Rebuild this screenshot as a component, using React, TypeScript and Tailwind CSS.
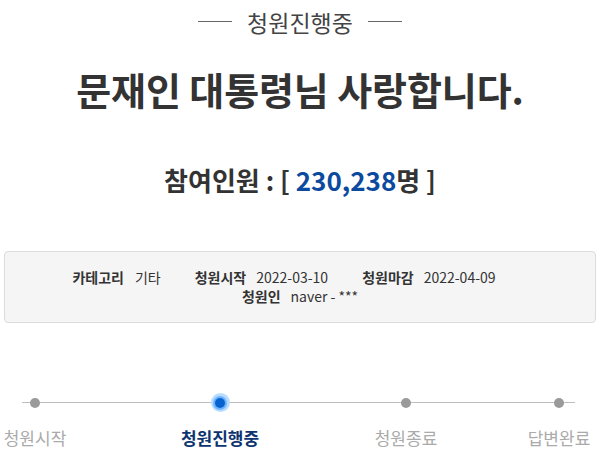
import React from 'react';

const steps = [
  { label: '청원시작', active: false, ml: 'ml-0' },
  { label: '청원진행중', active: true, ml: 'ml-[115px]' },
  { label: '청원종료', active: false, ml: 'ml-[116px]' },
  { label: '답변완료', active: false, ml: 'ml-[83px]' },
];

export default function App() {
  return (
    <div
      className="w-[600px] h-[461px] bg-white overflow-hidden text-[#333]"
      style={{ fontFamily: '"Noto Sans CJK KR", "Noto Sans", sans-serif' }}
    >
      {/* status label */}
      <div className="flex items-center justify-center gap-[15px] pt-[6px] h-[37px]">
        <span className="block w-[34px] h-px bg-[#666]" />
        <span className="text-[23px] leading-[30px] text-[#444]">청원진행중</span>
        <span className="block w-[34px] h-px bg-[#666]" />
      </div>

      {/* title */}
      <h1 className="mt-[27px] text-center text-[38px] leading-[50px] font-bold text-[#333] tracking-[-0.1px]">
        문재인 대통령님 사랑합니다.
      </h1>

      {/* participants */}
      <div className="mt-[49px] text-center text-[26px] leading-[34px] font-bold text-[#333]">
        참여인원 : [ <span className="text-[#0b4a9e]">230,238</span>명 ]
      </div>

      {/* info box */}
      <div className="mx-[4px] mt-[54px] h-[72px] rounded-[4px] border border-[#dcdcdc] bg-[#f5f5f5] pt-[16px] text-[14px] leading-[19px] text-[#333]">
        <div className="flex justify-center gap-[34px] pr-[32px]">
          <span>
            <b className="font-bold">카테고리</b>
            <span className="ml-[11px]">기타</span>
          </span>
          <span>
            <b className="font-bold">청원시작</b>
            <span className="ml-[10px]">2022-03-10</span>
          </span>
          <span>
            <b className="font-bold">청원마감</b>
            <span className="ml-[10px]">2022-04-09</span>
          </span>
        </div>
        <div className="flex justify-center">
          <b className="font-bold">청원인</b>
          <span className="ml-[10px]">naver - ***</span>
        </div>
      </div>

      {/* progress */}
      <div className="relative mt-[74px]">
        <div className="absolute left-[22px] right-[25px] top-[5px] h-px bg-[#bdbdbd]" />
        <div className="relative flex">
          {steps.map((s) => (
            <div key={s.label} className={`${s.ml} w-[70px] flex flex-col items-center`}>
              <div className="h-[11px] flex items-center justify-center">
                {s.active ? (
                  <span className="flex items-center justify-center w-[19px] h-[19px] rounded-full bg-[#b9dcff]">
                    <span className="block w-[10px] h-[10px] rounded-full bg-[#0863cf] ring-2 ring-[#6db4ff]" />
                  </span>
                ) : (
                  <span className="block w-[10px] h-[10px] rounded-full bg-[#9a9a9a]" />
                )}
              </div>
              <div
                className={
                  s.active
                    ? 'mt-[18px] whitespace-nowrap text-[17px] leading-[24px] font-bold text-[#0d3470]'
                    : 'mt-[18px] whitespace-nowrap text-[17px] leading-[24px] text-[#aaa]'
                }
              >
                {s.label}
              </div>
            </div>
          ))}
        </div>
      </div>
    </div>
  );
}
